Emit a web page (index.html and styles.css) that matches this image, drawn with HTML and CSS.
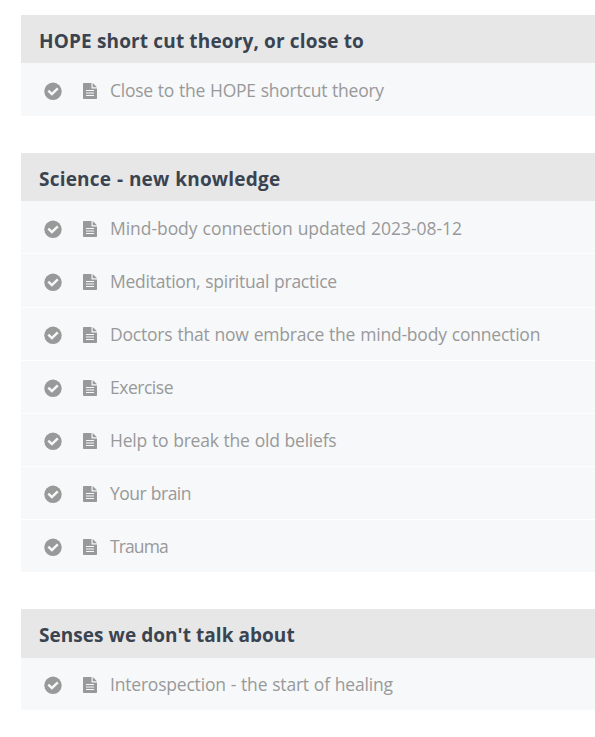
FILE: index.html
```html
<!DOCTYPE html>
<html lang="en">
<head>
<meta charset="utf-8">
<title>Course curriculum</title>
<link rel="stylesheet" href="styles.css">
</head>
<body>
<svg class="sprite" aria-hidden="true">
  <symbol id="check" viewBox="0 0 18 18"><circle cx="9" cy="9.3" r="8.7"/><path class="tick" d="M4.3 8.7 7.9 12.1 13.8 6.4"/></symbol>
  <symbol id="doc" viewBox="0 0 14 16"><path fill-rule="evenodd" d="M.8 0H8.5V5.5H14V15.2Q14 16 13.2 16H.8Q0 16 0 15.2V.8Q0 0 .8 0ZM3 7V8.1H11V7ZM3 9.4V10.5H11V9.4ZM3 11.9V13H11V11.9Z"/><path d="M9.7 0 14 4.3H9.7Z"/></symbol>
</svg>
<main class="curriculum">
  <section class="chapter">
    <h2 class="chapter-title t1">HOPE short cut theory, or close to</h2>
    <ul class="lessons">
      <li class="lesson"><svg class="check"><use href="#check"/></svg><svg class="doc"><use href="#doc"/></svg><span class="l1">Close to the HOPE shortcut theory</span></li>
    </ul>
  </section>
  <section class="chapter">
    <h2 class="chapter-title t2">Science - new knowledge</h2>
    <ul class="lessons">
      <li class="lesson"><svg class="check"><use href="#check"/></svg><svg class="doc"><use href="#doc"/></svg><span class="l2">Mind-body connection updated 2023-08-12</span></li>
      <li class="lesson"><svg class="check"><use href="#check"/></svg><svg class="doc"><use href="#doc"/></svg><span class="l3">Meditation, spiritual practice</span></li>
      <li class="lesson"><svg class="check"><use href="#check"/></svg><svg class="doc"><use href="#doc"/></svg><span class="l4">Doctors that now embrace the mind-body connection</span></li>
      <li class="lesson"><svg class="check"><use href="#check"/></svg><svg class="doc"><use href="#doc"/></svg><span class="l5">Exercise</span></li>
      <li class="lesson"><svg class="check"><use href="#check"/></svg><svg class="doc"><use href="#doc"/></svg><span class="l6">Help to break the old beliefs</span></li>
      <li class="lesson"><svg class="check"><use href="#check"/></svg><svg class="doc"><use href="#doc"/></svg><span class="l7">Your brain</span></li>
      <li class="lesson"><svg class="check"><use href="#check"/></svg><svg class="doc"><use href="#doc"/></svg><span class="l8">Trauma</span></li>
    </ul>
  </section>
  <section class="chapter">
    <h2 class="chapter-title t3">Senses we don't talk about</h2>
    <ul class="lessons">
      <li class="lesson"><svg class="check"><use href="#check"/></svg><svg class="doc"><use href="#doc"/></svg><span class="l9">Interospection - the start of healing</span></li>
    </ul>
  </section>
</main>
</body>
</html>
```
FILE: styles.css
```css
* { box-sizing: border-box; }
body { margin: 0; background: #fff; font-family: "Segoe UI", "Open Sans", sans-serif; }
.sprite { display: none; }
.curriculum { padding: 15px 0 0 21px; }
.chapter { margin-bottom: 37px; }
.chapter-title { margin: 0; height: 48px; padding: 2px 18px 0; line-height: 48px; font-size: 19px; font-weight: 700; color: #3a4350; background: #e7e7e7; white-space: nowrap; }
.chapter:last-child .chapter-title { height: 49px; }
.t1 { letter-spacing: .15px; }
.t2 { letter-spacing: .2px; word-spacing: .6px; }
.t3 { letter-spacing: .05px; }

.lessons { margin: 0; padding: 0; list-style: none; }
.lesson { display: flex; align-items: flex-start; height: 53px; padding-left: 23px; background: #f6f8fa; border-bottom: 1px solid #fff; color: #999; font-size: 17.5px; line-height: 54px; white-space: nowrap; word-spacing: .6px; }
.lesson:nth-child(2) { height: 54px; }
.lesson:nth-child(n+3) > *,
.chapter:last-child .lesson > * { transform: translateY(-1px); }
.lesson:last-child { border-bottom: 0; }
.lesson:nth-child(7),
.chapter:last-child .lesson { height: 52px; }
.check { flex: none; width: 18px; height: 18px; margin: 19px 21px 0 0; fill: #999; }
.tick { fill: none; stroke: #f6f8fa; stroke-width: 2.5; }
.doc { flex: none; width: 14px; height: 16px; margin: 20px 13px 0 0; fill: #999; }
.l1 { letter-spacing: -.24px; }
.l2 { letter-spacing: -.05px; }
.l3 { letter-spacing: -.25px; }
.l4 { letter-spacing: -.2px; }
.l5 { letter-spacing: -.48px; }
.l6 { letter-spacing: -.22px; }
.l7 { letter-spacing: -.51px; }
.l8 { letter-spacing: -.88px; }
.l9 { letter-spacing: -.2px; }
```
